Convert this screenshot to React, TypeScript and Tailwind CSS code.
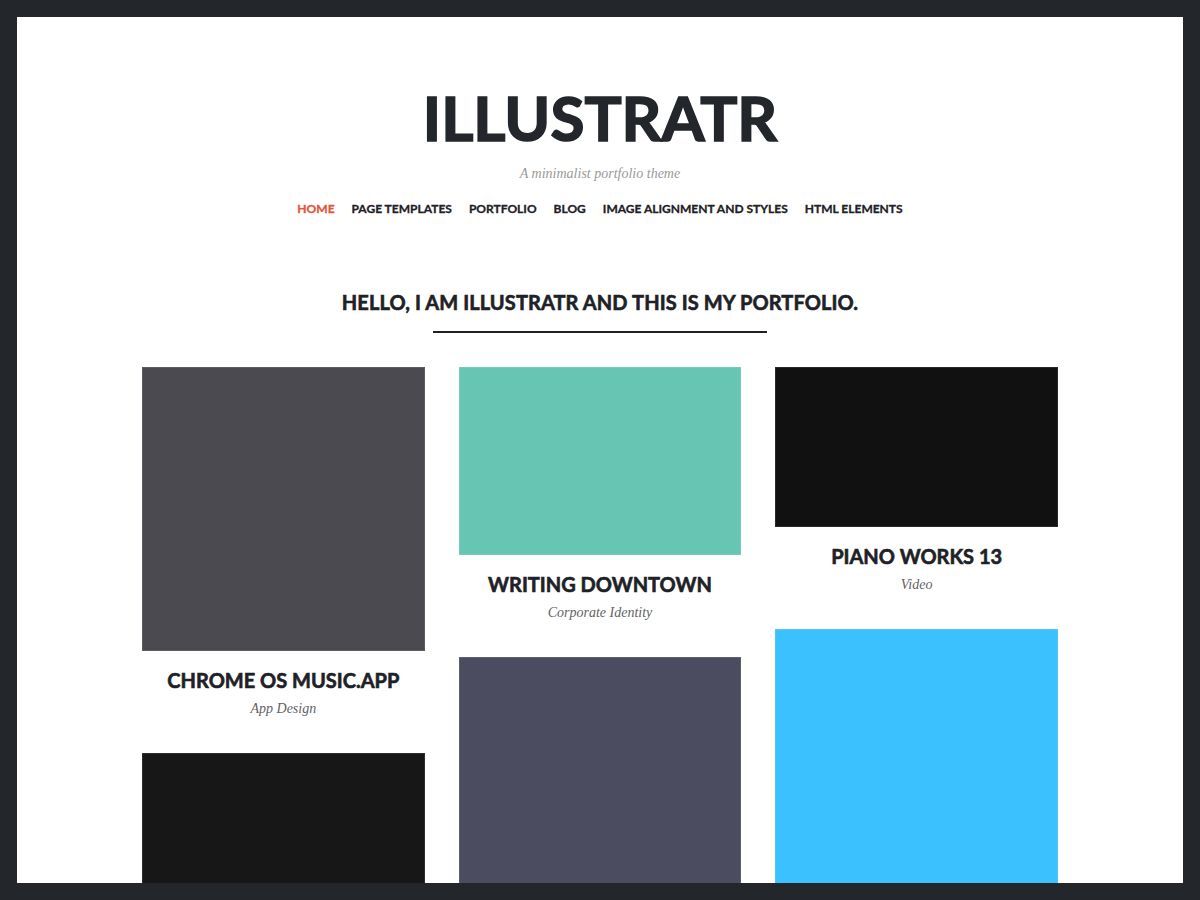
import React from 'react';

interface Project {
  title?: string;
  type?: string;
  color: string;
  height: string;
}

const columns: Project[][] = [
  [
    { title: 'Chrome OS Music.app', type: 'App Design', color: 'bg-[#4a4a50]', height: 'h-[284px]' },
    { color: 'bg-[#171717]', height: 'h-[284px]' },
  ],
  [
    { title: 'Writing Downtown', type: 'Corporate Identity', color: 'bg-[#67c5b3]', height: 'h-[188px]' },
    { color: 'bg-[#4b4c60]', height: 'h-[284px]' },
  ],
  [
    { title: 'Piano Works 13', type: 'Video', color: 'bg-[#111111]', height: 'h-[160px]' },
    { color: 'bg-[#3bc1fd]', height: 'h-[284px]' },
  ],
];

const navItems = ['Home', 'Page Templates', 'Portfolio', 'Blog', 'Image Alignment and Styles', 'HTML Elements'];

const sans = { fontFamily: 'Lato, "Open Sans", sans-serif' };

const Card: React.FC<{ project: Project }> = ({ project }) => (
  <div className="flex flex-col">
    <div className={`${project.color} ${project.height} w-full border border-white/10`} />
    {project.title && (
      <>
        <h2
          className="mt-[16px] text-center text-[20px] leading-[26px] font-bold uppercase text-[#1e2126] [-webkit-text-stroke:0.6px_#1e2126]"
          style={sans}
        >
          {project.title}
        </h2>
        <p className="mt-[5px] text-center text-[14px] italic text-[#5f6368] font-['Liberation_Serif',serif]">
          {project.type}
        </p>
        <div className="h-[34px]" />
      </>
    )}
  </div>
);

export default function App() {
  return (
    <div className="h-screen bg-[#23262b] p-[17px]">
      <div className="h-full overflow-hidden bg-white">
        <header className="flex flex-col items-center pt-[64px]">
          <h1
            className="text-[62px] leading-[72px] font-bold text-[#23262b] [-webkit-text-stroke:1.6px_#23262b]"
            style={sans}
          >
            ILLUSTRATR
          </h1>
          <p className="mt-[10px] text-[14px] italic text-[#9a9a9a] font-['Liberation_Serif',serif]">
            A minimalist portfolio theme
          </p>
          <nav className="mt-[16px] flex gap-[17px]">
            {navItems.map((item, i) => (
              <a
                key={item}
                href="#"
                className={`text-[12px] font-bold uppercase ${
                  i === 0
                    ? 'text-[#e5533d] [-webkit-text-stroke:0.3px_#e5533d]'
                    : 'text-[#1e2126] [-webkit-text-stroke:0.3px_#1e2126]'
                }`}
                style={sans}
              >
                {item}
              </a>
            ))}
          </nav>
        </header>

        <section className="mt-[69px] flex flex-col items-center">
          <h3
            className="text-[20px] font-bold uppercase tracking-[0.1px] text-[#1e2126] [-webkit-text-stroke:0.6px_#1e2126]"
            style={sans}
          >
            Hello, I am Illustratr and this is my portfolio.
          </h3>
          <div className="mt-[14px] h-[2px] w-[334px] bg-[#1e2126]" />
        </section>

        <main className="mx-auto mt-[34px] grid w-[916px] grid-cols-3 gap-x-[34px]">
          {columns.map((col, ci) => (
            <div key={ci} className="flex flex-col">
              {col.map((p, pi) => (
                <Card key={pi} project={p} />
              ))}
            </div>
          ))}
        </main>
      </div>
    </div>
  );
}
